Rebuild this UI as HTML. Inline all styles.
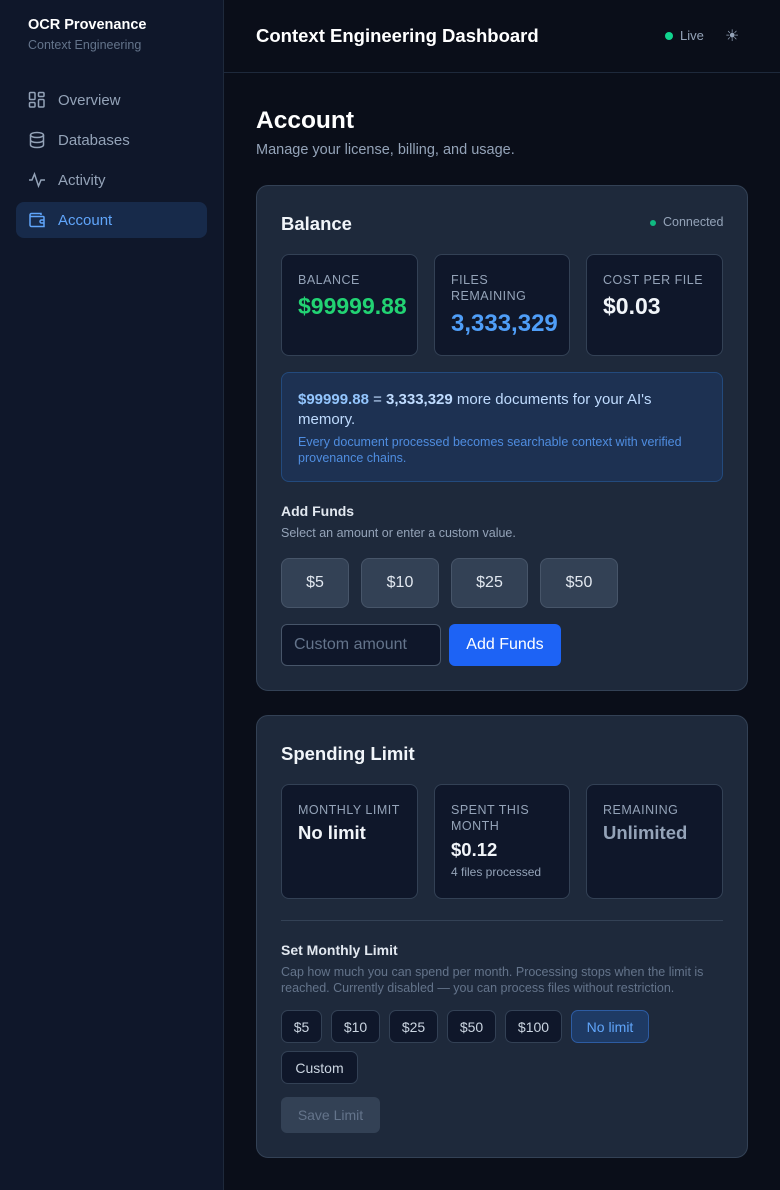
<!DOCTYPE html>
<html><head><meta charset="utf-8"><style>
*{box-sizing:border-box;margin:0;padding:0}
body{width:780px;height:1190px;background:#0a0e19;font-family:"Liberation Sans","DejaVu Sans",sans-serif;position:relative;overflow:hidden;color:#f1f5f9}
.a{position:absolute}
.side{left:0;top:0;width:224px;height:1190px;background:#0f172a;border-right:1px solid #1e293b}
.nav{left:16px;width:191px;height:36px;border-radius:8px;display:flex;align-items:center;padding-left:12px;font-size:15px;color:#94a3b8}
.nav svg{margin-right:12px}
.card{left:256px;width:492px;background:#1e293b;border:1px solid #334155;border-radius:12px}
.stat{background:#0f172a;border:1px solid #334155;border-radius:8px;padding:17px 16px}
.lbl{font-size:12.5px;color:#94a3b8;letter-spacing:.5px;line-height:16px}
.val{font-size:22px;font-weight:bold;margin-top:6px}
.btn{height:50px;background:#334155;border:1px solid #475569;border-radius:8px;display:flex;align-items:center;justify-content:center;font-size:16px;color:#e2e8f0}
.sb{height:33px;background:#0f172a;border:1px solid #334155;border-radius:7px;display:flex;align-items:center;justify-content:center;font-size:14px;color:#cbd5e1}
</style></head><body>
<div class="a side"></div>
<div class="a" style="left:28px;top:17px;font-size:14.5px;font-weight:bold;color:#fff">OCR Provenance</div>
<div class="a" style="left:28px;top:38px;font-size:12.5px;color:#64748b">Context Engineering</div>

<div class="a nav" style="top:82px"><svg width="18" height="18" viewBox="0 0 18 18" fill="none" stroke="#94a3b8" stroke-width="1.5"><rect x="1.5" y="1.5" width="5.5" height="7" rx="1"/><rect x="10.5" y="1.5" width="5.5" height="4" rx="1"/><rect x="10.5" y="8.5" width="5.5" height="7.5" rx="1"/><rect x="1.5" y="11.5" width="5.5" height="4.5" rx="1"/></svg>Overview</div>
<div class="a nav" style="top:122px"><svg width="18" height="18" viewBox="0 0 18 18" fill="none" stroke="#94a3b8" stroke-width="1.5"><ellipse cx="9" cy="4" rx="6.5" ry="2.5"/><path d="M2.5 4v10c0 1.4 2.9 2.5 6.5 2.5s6.5-1.1 6.5-2.5V4M2.5 9c0 1.4 2.9 2.5 6.5 2.5s6.5-1.1 6.5-2.5"/></svg>Databases</div>
<div class="a nav" style="top:162px"><svg width="18" height="18" viewBox="0 0 18 18" fill="none" stroke="#94a3b8" stroke-width="1.5"><path d="M1 9h3l2.5-6 4 12 2.5-6h4"/></svg>Activity</div>
<div class="a nav" style="top:202px;background:#172a4a;color:#60a5fa"><svg width="18" height="18" viewBox="0 0 18 18" fill="none" stroke="#60a5fa" stroke-width="1.5"><path d="M13 4V2.5H3.5a1.5 1.5 0 0 0 0 3H15a1 1 0 0 1 1 1v9H3.5A1.5 1.5 0 0 1 2 14V4"/><path d="M16 9h-2.5a1.5 1.5 0 0 0 0 3H16"/></svg>Account</div>

<div class="a" style="left:224px;top:72px;width:556px;height:1px;background:#1e293b"></div>
<div class="a" style="left:256px;top:25px;font-size:18.5px;font-weight:bold;color:#fff">Context Engineering Dashboard</div>
<div class="a" style="left:665px;top:32px;width:8px;height:8px;border-radius:50%;background:#10d48e"></div>
<div class="a" style="left:680px;top:28px;font-size:13px;color:#94a3b8">Live</div>
<div class="a" style="left:725px;top:26px;font-size:16px;color:#94a3b8">☀</div>

<div class="a" style="left:256px;top:107px;font-size:24.5px;font-weight:bold;color:#fff">Account</div>
<div class="a" style="left:256px;top:142px;font-size:14.5px;color:#94a3b8">Manage your license, billing, and usage.</div>

<div class="a card" style="top:185px;height:506px"></div>
<div class="a" style="left:281px;top:213px;font-size:18.5px;font-weight:bold">Balance</div>
<div class="a" style="left:650px;top:220px;width:6px;height:6px;border-radius:50%;background:#10b981"></div>
<div class="a" style="left:663px;top:215px;font-size:12.5px;color:#94a3b8">Connected</div>
<div class="a stat" style="left:281px;top:254px;width:137px;height:102px"><div class="lbl">BALANCE</div><div class="val" style="color:#22d373;margin-top:5px;font-size:23px">$99999.88</div></div>
<div class="a stat" style="left:434px;top:254px;width:136px;height:102px"><div class="lbl">FILES<br>REMAINING</div><div class="val" style="color:#4f9ef8;font-size:24px">3,333,329</div></div>
<div class="a stat" style="left:586px;top:254px;width:137px;height:102px"><div class="lbl">COST PER FILE</div><div class="val" style="margin-top:5px;font-size:23px">$0.03</div></div>
<div class="a" style="left:281px;top:372px;width:442px;height:110px;background:#1d3152;border:1px solid #234a7d;border-radius:8px;padding:17px 50px 16px 16px"><div style="font-size:15px;color:#bfdbfe;line-height:20px"><b style="color:#93c5fd">$99999.88</b> = <b style="color:#bfdbfe">3,333,329</b> more documents for your AI's memory.</div><div style="font-size:12.5px;color:#4f8de0;line-height:16px;margin-top:4px;margin-right:-30px">Every document processed becomes searchable context with verified provenance chains.</div></div>
<div class="a" style="left:281px;top:503px;font-size:14px;font-weight:bold;color:#e2e8f0">Add Funds</div>
<div class="a" style="left:281px;top:526px;font-size:12.5px;color:#94a3b8">Select an amount or enter a custom value.</div>
<div class="a btn" style="left:281px;top:558px;width:68px">$5</div>
<div class="a btn" style="left:361px;top:558px;width:78px">$10</div>
<div class="a btn" style="left:451px;top:558px;width:77px">$25</div>
<div class="a btn" style="left:540px;top:558px;width:78px">$50</div>
<div class="a" style="left:281px;top:624px;width:160px;height:42px;background:#0f172a;border:1px solid #475569;border-radius:6px;padding:0 12px;display:flex;align-items:center;font-size:16px;color:#64748b;overflow:hidden;white-space:nowrap">Custom amount</div>
<div class="a" style="left:449px;top:624px;width:112px;height:42px;background:#1d63f5;border-radius:6px;display:flex;align-items:center;justify-content:center;font-size:16px;color:#fff">Add Funds</div>

<div class="a card" style="top:715px;height:443px"></div>
<div class="a" style="left:281px;top:743px;font-size:18.5px;font-weight:bold">Spending Limit</div>
<div class="a stat" style="left:281px;top:784px;width:137px;height:115px"><div class="lbl">MONTHLY LIMIT</div><div class="val" style="font-size:18.5px;margin-top:4px">No limit</div></div>
<div class="a stat" style="left:434px;top:784px;width:136px;height:115px"><div class="lbl">SPENT THIS<br>MONTH</div><div class="val" style="font-size:18.5px;margin-top:5px">$0.12</div><div style="font-size:12px;color:#94a3b8;margin-top:4px">4 files processed</div></div>
<div class="a stat" style="left:586px;top:784px;width:137px;height:115px"><div class="lbl">REMAINING</div><div class="val" style="font-size:18.5px;margin-top:4px;color:#94a3b8">Unlimited</div></div>
<div class="a" style="left:281px;top:920px;width:442px;height:1px;background:#334155"></div>
<div class="a" style="left:281px;top:942px;font-size:14px;font-weight:bold;color:#e2e8f0">Set Monthly Limit</div>
<div class="a" style="left:281px;top:964px;width:450px;font-size:12.5px;line-height:16px;color:#64748b">Cap how much you can spend per month. Processing stops when the limit is reached. Currently disabled — you can process files without restriction.</div>
<div class="a sb" style="left:281px;top:1010px;width:41px">$5</div>
<div class="a sb" style="left:331px;top:1010px;width:49px">$10</div>
<div class="a sb" style="left:389px;top:1010px;width:49px">$25</div>
<div class="a sb" style="left:447px;top:1010px;width:49px">$50</div>
<div class="a sb" style="left:505px;top:1010px;width:57px">$100</div>
<div class="a sb" style="left:571px;top:1010px;width:78px;background:#1e3a64;border-color:#2d5ca3;color:#60a5fa">No limit</div>
<div class="a sb" style="left:281px;top:1051px;width:77px">Custom</div>
<div class="a" style="left:281px;top:1097px;width:99px;height:36px;background:#334155;border-radius:6px;display:flex;align-items:center;justify-content:center;font-size:14px;color:#64748b">Save Limit</div>
</body></html>
